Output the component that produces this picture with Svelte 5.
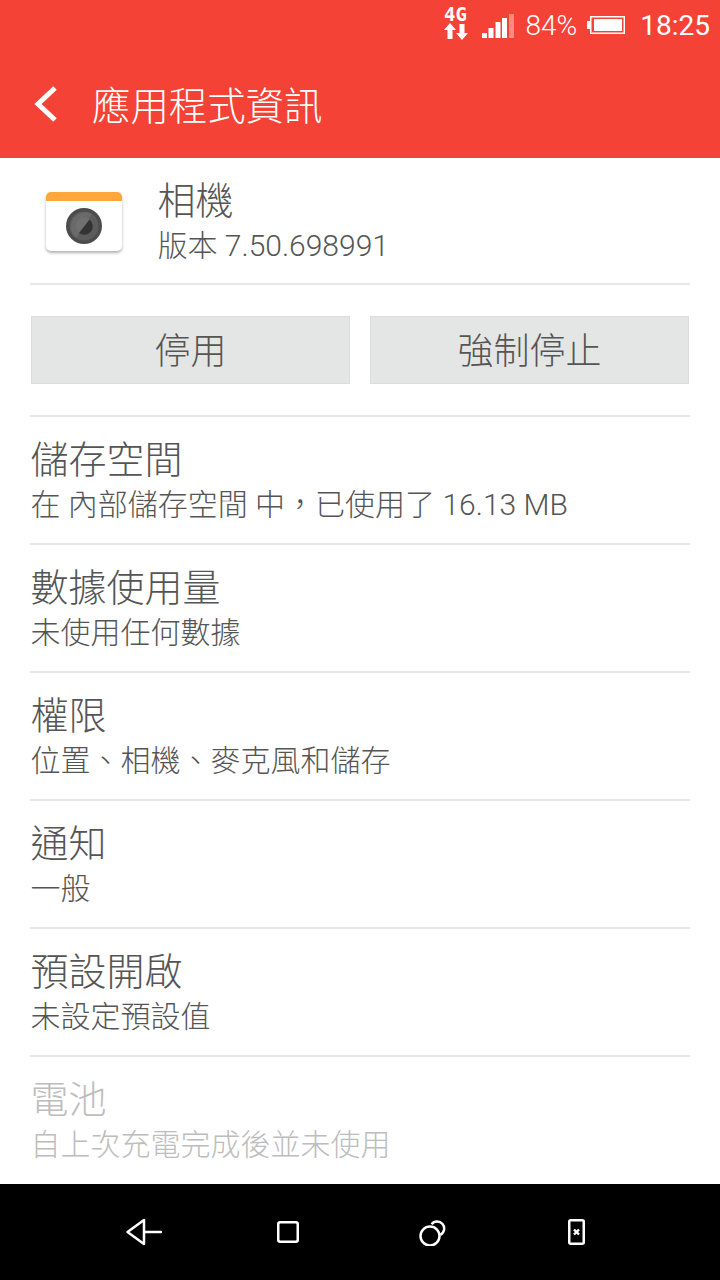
<script>
  const rows = [
    { title: '儲存空間', sub: '在 內部儲存空間 中，已使用了 16.13 MB' },
    { title: '數據使用量', sub: '未使用任何數據' },
    { title: '權限', sub: '位置、相機、麥克風和儲存' },
    { title: '通知', sub: '一般' },
    { title: '預設開啟', sub: '未設定預設值' },
    { title: '電池', sub: '自上次充電完成後並未使用', off: true }
  ];
</script>

<div class="phone">
  <header class="top">
    <div class="status">
      <div class="net">
        <span class="net-label">4G</span>
        <svg width="24" height="18" viewBox="0 0 24 18" fill="#fff">
          <path d="M6 0l6 7H8.5v9h-5V7H0zM18 17l-6-7h3.500V1h5v9H24z" />
        </svg>
      </div>
      <svg class="signal" width="32" height="24" viewBox="0 0 32 24">
        <rect x="0" y="19" width="5" height="5" fill="#fff" />
        <rect x="6.500" y="14" width="5" height="10" fill="#fff" />
        <rect x="13.500" y="8" width="5" height="16" fill="#fff" />
        <rect x="20" y="4" width="5" height="20" fill="#fff" />
        <rect x="27" y="0" width="5" height="24" fill="#ff8a80" />
      </svg>
      <span class="pct">84%</span>
      <svg class="batt" width="38" height="20" viewBox="0 0 38 20">
        <rect x="0" y="6" width="3" height="8" fill="#fff" />
        <rect x="3.75" y="1.75" width="33.5" height="16.5" fill="none" stroke="#fff" stroke-width="1.5" />
        <rect x="7" y="4" width="28" height="12" fill="#fff" />
      </svg>
      <span class="clock">18:25</span>
    </div>
    <div class="bar">
      <svg class="back" width="28" height="38" viewBox="0 0 28 38">
        <path d="M23 3L6 19l17 16" fill="none" stroke="#fff" stroke-width="5" />
      </svg>
      <h1>應用程式資訊</h1>
    </div>
  </header>

  <main>
    <section class="app">
      <div class="icon">
        <svg width="36" height="36" viewBox="0 0 36 36">
          <circle cx="18" cy="18" r="18" fill="#4c4c4c" />
          <circle cx="18" cy="18" r="14.500" fill="#5c5c5c" />
          <path d="M26 6L10 30a14.500 14.500 0 0 1 16-24z" fill="#6a6a6a" />
          <circle cx="18" cy="18" r="8.500" fill="#707070" />
          <path d="M23.500 11.500A8.500 8.500 0 0 1 13 25z" fill="#333" />
        </svg>
      </div>
      <div class="meta">
        <div class="name">相機</div>
        <div class="ver">版本 7.50.698991</div>
      </div>
    </section>

    <section class="actions">
      <button>停用</button>
      <button>強制停止</button>
    </section>

    {#each rows as r}
      <section class="row" class:off={r.off}>
        <div class="title">{r.title}</div>
        <div class="sub">{r.sub}</div>
      </section>
    {/each}
  </main>

  <nav>
    <svg width="36" height="28" viewBox="0 0 36 28" fill="none" stroke="#fff" stroke-width="2.5" stroke-linejoin="round" stroke-linecap="round">
      <path d="M1.5 14L18 2v24zM18 14h17" />
    </svg>
    <svg width="22" height="22" viewBox="0 0 22 22" fill="none" stroke="#fff" stroke-width="2.5">
      <rect x="1.25" y="1.25" width="19.5" height="19.5" rx="2" />
    </svg>
    <svg width="28" height="28" viewBox="0 0 28 28" fill="none" stroke="#fff" stroke-width="2.5">
      <circle cx="12" cy="18" r="9.5" />
      <path d="M13.6 6.3A7 7 0 1 1 22.3 16.8" />
    </svg>
    <svg width="17" height="26" viewBox="0 0 17 26" fill="none" stroke="#fff">
      <rect x="1.25" y="1.25" width="14.5" height="23.5" rx="1.5" stroke-width="2.5" />
      <path d="M6 10.5l5 5M11 10.5l-5 5" stroke-width="2.4" />
    </svg>
  </nav>
</div>

<style>
  :global(body) { margin: 0; background: #fff; }
  .phone {
    width: 720px;
    height: 1280px;
    display: flex;
    flex-direction: column;
    overflow: hidden;
    font-family: Roboto, "Noto Sans CJK TC", sans-serif;
    color: #555;
    background: #fff;
  }
  .top { height: 158px; background: #f44336; color: #fff; flex: none; }
  .status {
    height: 50px;
    display: flex;
    align-items: center;
    justify-content: flex-end;
    padding-right: 10px;
    box-sizing: border-box;
  }
  .net { margin-right: 14px; width: 24px; display: flex; flex-direction: column; align-items: center; gap: 1px; margin-top: -2px; }
  .net-label { font: bold 19px/15px "DejaVu Sans Mono", monospace; }
  .signal { margin-right: 12px; margin-top: 2px; }
  .pct { font-size: 28px; font-weight: 300; margin-right: 10px; }
  .batt { margin-right: 15px; margin-top: -1px; }
  .clock { font-size: 28px; font-weight: 400; }
  .bar { height: 108px; display: flex; align-items: flex-start; padding: 30px 0 0 32px; box-sizing: border-box; }
  .back { margin-top: 5px; }
  h1 { margin: 0 0 0 32px; font-size: 38.4px; font-weight: 300; line-height: 54px; }

  main { flex: 1; padding: 0 30px; }
  .app { height: 127px; box-sizing: border-box; display: flex; border-bottom: 2px solid #e8e8e8; }
  .icon {
    margin: 34px 0 0 16px;
    width: 76px;
    height: 59px;
    box-sizing: border-box;
    background: #fff;
    border-top: 9px solid #ffa73c;
    border-radius: 5px;
    box-shadow: 0 2px 3px rgba(0,0,0,.3);
    display: flex;
    align-items: center;
    justify-content: center;
  }
  .meta { margin-left: 35.5px; padding-top: 17px; }
  .name { font-size: 38px; line-height: 52px; font-weight: 300; }
  .ver { font-size: 30px; line-height: 38px; font-weight: 300; }
  .actions {
    height: 132px;
    box-sizing: border-box;
    padding: 31px 1px;
    display: flex;
    gap: 20px;
    border-bottom: 2px solid #e8e8e8;
  }
  button {
    flex: 1;
    height: 68px;
    border: 1px solid #dcdede;
    background: #e4e6e6;
    font: inherit;
    font-size: 36px;
    font-weight: 300;
    color: #555;
    padding: 0 0 4px;
  }
  .row { height: 128px; box-sizing: border-box; border-bottom: 2px solid #e8e8e8; padding: 17px 0 0 0.5px; }
  .row:last-child { border-bottom: 0; height: 127px; }
  .title { font-size: 38px; line-height: 52px; font-weight: 300; }
  .sub { font-size: 30px; line-height: 38px; font-weight: 300; }
  .off { color: #bdbdbd; }
  nav {
    height: 96px;
    flex: none;
    background: #000;
    display: grid;
    grid-template-columns: repeat(4, 144px);
    padding-left: 72px;
    justify-items: center;
    align-items: center;
  }
</style>
